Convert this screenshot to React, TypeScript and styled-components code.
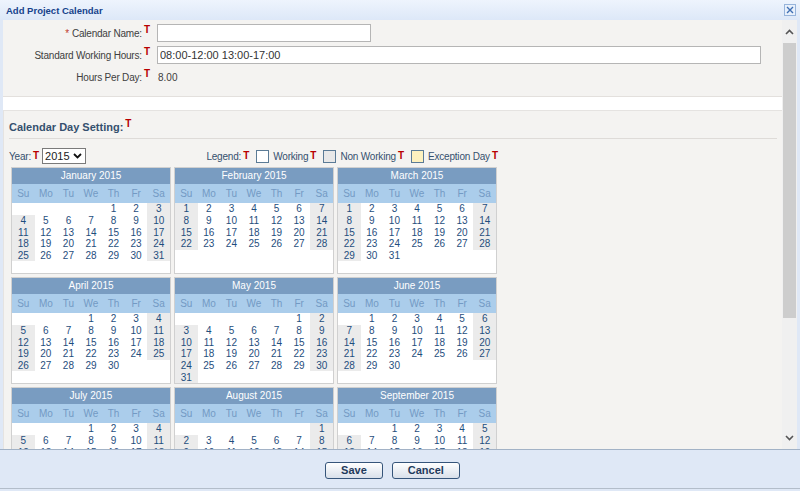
import React from 'react'
import styled, { createGlobalStyle } from 'styled-components'

const GlobalStyle = createGlobalStyle`
  html, body {
    margin: 0;
    padding: 0;
  }
  body {
    font-family: 'Liberation Sans', Arial, sans-serif;
    font-size: 10px;
    background: #dfe8f6;
  }
`

const MONTHS = [
  'January', 'February', 'March', 'April', 'May', 'June',
  'July', 'August', 'September', 'October', 'November', 'December',
]
const DAY_NAMES = ['Su', 'Mo', 'Tu', 'We', 'Th', 'Fr', 'Sa']
const YEAR = 2015

const Dialog = styled.div`
  width: 800px;
  height: 491px;
  display: flex;
  flex-direction: column;
  background: #dfe8f6;
  padding-bottom: 2px;
  box-sizing: border-box;
  overflow: hidden;
`

const TitleBar = styled.div`
  flex: none;
  height: 20px;
  display: flex;
  align-items: center;
  justify-content: space-between;
  padding: 0 4px 0 6px;
  background: linear-gradient(#eef4fd, #dde8f8);
`

const Title = styled.div`
  font-size: 9.5px;
  font-weight: bold;
  color: #15428b;
`

const CloseButton = styled.button`
  width: 12px;
  height: 12px;
  padding: 0;
  border: 1px solid #97b4db;
  background: #e8f0fb;
  display: flex;
  align-items: center;
  justify-content: center;
  cursor: pointer;
`

const Body = styled.div`
  flex: 1;
  min-height: 0;
  display: flex;
  padding: 0 3px;
`

const Scroller = styled.div`
  flex: 1;
  overflow: hidden;
  background: #fff;
`

const FormSection = styled.div`
  display: grid;
  grid-template-columns: 147px 1fr;
  grid-auto-rows: 18px;
  row-gap: 4px;
  column-gap: 7px;
  align-items: center;
  padding: 4px 0 10px;
  background: #f4f3f1;
  border-bottom: 1px solid #e3e0dd;
`

const Label = styled.div`
  text-align: right;
  white-space: nowrap;
  color: #404040;
  letter-spacing: -0.2px;
`

const Required = styled.span`
  color: #c0392b;
  margin-right: 3px;
`

const RedT = styled.span`
  font-size: 10px;
  font-weight: bold;
  color: #b80000;
  margin-left: 2px;
  vertical-align: 4px;
  line-height: 0;
  letter-spacing: 0;
`

const TextInput = styled.input<{ $wide?: boolean }>`
  box-sizing: border-box;
  height: 18px;
  width: ${({ $wide }) => ($wide ? 'calc(100% - 21px)' : '214px')};
  border: 1px solid #b5b5b5;
  background: #fff;
  padding: 0 2px;
  font-family: 'Liberation Sans', Arial, sans-serif;
  font-size: 11px;
  color: #333;
  outline: none;
`

const Value = styled.div`
  padding-left: 1px;
  color: #404040;
`

const DaySection = styled.div`
  margin-top: 13px;
  background: #f4f3f1;
  border-top: 1px solid #e5e3e1;
  border-left: 1px solid #e5e3e1;
  padding: 9px 5px 12px 5px;
`

const Heading = styled.div`
  font-size: 11px;
  font-weight: bold;
  line-height: 14px;
  color: #34506e;
`

const Divider = styled.div`
  height: 1px;
  margin-top: 4px;
  background: #dedbd8;
`

const CalendarBlock = styled.div`
  width: 489px;
`

const ToolRow = styled.div`
  margin-top: 9px;
  height: 16px;
  display: flex;
  align-items: center;
  justify-content: space-between;
  color: #34506e;
`

const Group = styled.div`
  display: flex;
  align-items: center;
  letter-spacing: -0.2px;
`

const YearSelect = styled.div`
  box-sizing: border-box;
  width: 44px;
  height: 16px;
  margin-left: 3px;
  border: 1px solid #7a7a7a;
  background: #fff;
  display: flex;
  align-items: center;
  justify-content: space-between;
  padding: 0 3px 0 2px;
  font-size: 11px;
  color: #222;
  letter-spacing: 0;
`

const LegendBox = styled.span<{ $bg: string }>`
  box-sizing: border-box;
  width: 13px;
  height: 13px;
  margin: 0 4px 0 7px;
  border: 1px solid #5b7b96;
  background: ${({ $bg }) => $bg};
`

const MonthGrid = styled.div`
  display: grid;
  grid-template-columns: repeat(3, 160px);
  gap: 3px;
  margin: 3px 0 0 2px;
`

const MonthBox = styled.div`
  border: 1px solid #d0d0d0;
  background: #fff;
`

const MonthHeader = styled.div`
  height: 16px;
  line-height: 16px;
  text-align: center;
  background: #799cc1;
  color: #fff;
`

const WeekRow = styled.div`
  display: grid;
  grid-template-columns: repeat(7, 1fr);
  height: 19px;
  line-height: 19px;
  background: #abcdeb;
  color: #739ac4;
  text-align: center;
`

const Dates = styled.div`
  display: grid;
  grid-template-columns: repeat(7, 1fr);
  grid-template-rows: repeat(6, 1fr);
  height: 70px;
`

const DayCell = styled.div<{ $weekend?: boolean }>`
  display: flex;
  align-items: center;
  justify-content: center;
  color: #1f4e7d;
  background: ${({ $weekend }) => ($weekend ? '#ebebeb' : 'transparent')};
`

const ScrollBar = styled.div`
  flex: none;
  width: 15px;
  display: flex;
  flex-direction: column;
  background: #f0f0f0;
`

const ArrowButton = styled.div`
  flex: none;
  height: 23px;
  display: flex;
  align-items: center;
  justify-content: center;
`

const Track = styled.div`
  flex: 1;
  padding: 0 1px;
`

const Thumb = styled.div`
  height: 275px;
  background: #cdcdcd;
`

const Footer = styled.div`
  flex: none;
  box-sizing: border-box;
  height: 40px;
  display: flex;
  align-items: center;
  justify-content: center;
  gap: 9px;
  padding: 2px 15px 0 0;
  border-top: 1px solid #a2b2c6;
  border-bottom: 1px solid #b3bdca;
`

const Button = styled.button`
  box-sizing: border-box;
  height: 17px;
  padding: 0 15px;
  display: inline-flex;
  align-items: center;
  justify-content: center;
  border: 1px solid #36557a;
  border-radius: 3px;
  background: linear-gradient(#ffffff, #d9e0ea);
  font-family: 'Liberation Sans', Arial, sans-serif;
  font-size: 11px;
  font-weight: bold;
  color: #1f3a5c;
  line-height: 13px;
  cursor: pointer;
`

function Chevron({ up }: { up?: boolean }) {
  return (
    <svg width="9" height="6" viewBox="0 0 9 6">
      <polyline
        points={up ? '1,5 4.5,1.5 8,5' : '1,1 4.5,4.5 8,1'}
        fill="none"
        stroke="#555"
        strokeWidth="1.6"
      />
    </svg>
  )
}

function Month({ month }: { month: number }) {
  const first = new Date(YEAR, month, 1).getDay()
  const count = new Date(YEAR, month + 1, 0).getDate()
  const cells: (number | null)[] = []
  for (let i = 0; i < 42; i++) {
    const d = i - first + 1
    cells.push(d >= 1 && d <= count ? d : null)
  }

  return (
    <MonthBox>
      <MonthHeader>
        {MONTHS[month]} {YEAR}
      </MonthHeader>
      <WeekRow>
        {DAY_NAMES.map((n) => (
          <div key={n}>{n}</div>
        ))}
      </WeekRow>
      <Dates>
        {cells.map((d, i) => {
          const dow = i % 7
          return (
            <DayCell key={i} $weekend={d !== null && (dow === 0 || dow === 6)}>
              {d}
            </DayCell>
          )
        })}
      </Dates>
    </MonthBox>
  )
}

export default function App() {
  return (
    <>
      <GlobalStyle />
      <Dialog>
        <TitleBar>
          <Title>Add Project Calendar</Title>
          <CloseButton aria-label="Close">
            <svg width="8" height="8" viewBox="0 0 8 8">
              <path d="M1 1L7 7M7 1L1 7" stroke="#3f6fb3" strokeWidth="1.4" />
            </svg>
          </CloseButton>
        </TitleBar>

        <Body>
          <Scroller>
            <FormSection>
              <Label>
                <Required>*</Required>Calendar Name:<RedT>T</RedT>
              </Label>
              <div>
                <TextInput defaultValue="" />
              </div>
              <Label>
                Standard Working Hours:<RedT>T</RedT>
              </Label>
              <div>
                <TextInput $wide defaultValue="08:00-12:00 13:00-17:00" />
              </div>
              <Label>
                Hours Per Day:<RedT>T</RedT>
              </Label>
              <Value>8.00</Value>
            </FormSection>

            <DaySection>
              <Heading>
                Calendar Day Setting:<RedT>T</RedT>
              </Heading>
              <Divider />
              <CalendarBlock>
                <ToolRow>
                  <Group>
                    Year:<RedT>T</RedT>
                    <YearSelect>
                      <span>2015</span>
                      <svg width="9" height="6" viewBox="0 0 9 6">
                        <polyline points="1,1 4.5,4.5 8,1" fill="none" stroke="#111" strokeWidth="1.8" />
                      </svg>
                    </YearSelect>
                  </Group>
                  <Group>
                    Legend:<RedT>T</RedT>
                    <LegendBox $bg="#ffffff" />
                    Working<RedT>T</RedT>
                    <LegendBox $bg="#e8e8e8" />
                    Non Working<RedT>T</RedT>
                    <LegendBox $bg="#fdf1bf" />
                    Exception Day<RedT>T</RedT>
                  </Group>
                </ToolRow>
                <MonthGrid>
                  {MONTHS.map((_, m) => (
                    <Month key={m} month={m} />
                  ))}
                </MonthGrid>
              </CalendarBlock>
            </DaySection>
          </Scroller>

          <ScrollBar>
            <ArrowButton>
              <Chevron up />
            </ArrowButton>
            <Track>
              <Thumb />
            </Track>
            <ArrowButton>
              <Chevron />
            </ArrowButton>
          </ScrollBar>
        </Body>

        <Footer>
          <Button>Save</Button>
          <Button>Cancel</Button>
        </Footer>
      </Dialog>
    </>
  )
}
